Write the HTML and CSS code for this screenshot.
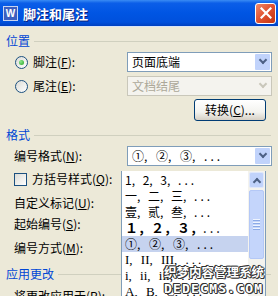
FILE: index.html
```html
<!DOCTYPE html>
<html lang="zh-CN">
<head>
<meta charset="UTF-8">
<title>脚注和尾注</title>
<link rel="stylesheet" href="styles.css">
</head>
<body>

<div class="window">

<div class="titlebar">
<span class="app-icon">W</span>
<span class="title">脚注和尾注</span>
<span class="close">
<svg width="12" height="12" viewBox="0 0 12 12"><path d="M1.5 1.5 L10.5 10.5 M10.5 1.5 L1.5 10.5" stroke="#fff" stroke-width="2.2" stroke-linecap="square"/></svg>
</span>
</div>

<div class="content">

<div class="group-label">位置</div>

<div class="row">
<label class="opt"><span class="radio checked"></span>脚注(<u>F</u>):</label>
<div class="select"><span class="value">页面底端</span><span class="arrow"></span></div>
</div>

<div class="row">
<label class="opt"><span class="radio"></span>尾注(<u>E</u>):</label>
<div class="select disabled"><span class="value">文档结尾</span><span class="arrow"></span></div>
</div>

<div class="btn-row">
<button class="btn">转换(<u>C</u>)...</button>
</div>

<div class="group-label">格式</div>

<div class="row">
<label class="plain">编号格式(<u>N</u>):</label>
<div class="select"><span class="value num">①, ②, ③, <b class="dots">...</b></span><span class="arrow"></span></div>
</div>

<div class="label-row first">
<label class="opt"><span class="check"></span>方括号样式(<u>Q</u>):</label>
</div>
<div class="label-row">
<label class="plain">自定义标记(<u>U</u>):</label>
</div>
<div class="label-row">
<label class="plain">起始编号(<u>S</u>):</label>
</div>
<div class="label-row tall">
<label class="plain">编号方式(<u>M</u>):</label>
</div>

<div class="group-label apply">应用更改</div>

<div class="label-row">
<label class="plain">将更改应用于(<u>P</u>):</label>
</div>

<div class="dropdown">
<ul class="items">
<li>1, 2, 3, <b class="dots">...</b></li>
<li>一, 二, 三, <b class="dots">...</b></li>
<li>壹, 贰, 叁, <b class="dots">...</b></li>
<li class="bold">１，２，３，<b class="dots">...</b></li>
<li class="sel">①, ②, ③, <b class="dots">...</b></li>
<li class="serif">I, II, III, <b class="dots">...</b></li>
<li class="serif">i, ii, iii, <b class="dots">...</b></li>
<li class="serif">A, B, C, <b class="dots">...</b></li>
</ul>
<div class="scrollbar">
<span class="sb-up"></span>
<span class="sb-thumb"><i></i><i></i><i></i><i></i></span>
</div>
</div>

<div class="watermark">
<span class="wm-cn">织梦内容管理系统</span>
<span class="wm-en">DEDECMS.COM</span>
</div>

</div>
</div>

</body>
</html>
```

FILE: styles.css
```css
body{
    margin:0;
    background:#ece9d8;
    font-family:"Noto Sans CJK SC", "Liberation Sans", sans-serif;
    font-size:12px;
    color:#000;
}

.window{
    width:278px;
    height:296px;
    overflow:hidden;
    background:#ece9d8;
}

.titlebar{
    height:26px;
    display:flex;
    align-items:center;
    padding:0 2px 0 3px;
    background:linear-gradient(#3a8cf4 0%, #0b5ee8 12%, #0055e3 50%, #0050dc 85%, #0040c0 100%);
    border-bottom:1px solid #d8e4f8;
}

.app-icon{
    width:13px;
    height:13px;
    background:#3d5fc0;
    border:1px solid #c8d4f0;
    color:#fff;
    font:bold 10px/13px "Liberation Sans", sans-serif;
    text-align:center;
}

.title{
    margin-left:5px;
    color:#fff;
    font-weight:bold;
    font-size:13px;
    text-shadow:1px 1px 0 #0a1f7a;
    flex:1;
}

.close{
    width:19px;
    height:19px;
    border:1px solid #fff;
    border-radius:3px;
    background:linear-gradient(135deg, #f08a6c 0%, #e0512f 50%, #c4330f 100%);
    display:flex;
    align-items:center;
    justify-content:center;
}

.content{
    position:relative;
    padding:0 6px;
}

.group-label{
    display:flex;
    align-items:center;
    color:#0046d5;
    line-height:14px;
    height:14px;
    margin-top:7px;
}

.group-label::after{
    content:"";
    flex:1;
    height:1px;
    background:#d0d0bf;
    margin-left:4px;
    margin-right:1px;
}

.row{
    display:grid;
    grid-template-columns:113px 145px;
    align-items:center;
    padding-left:8px;
    margin-top:4px;
    height:20px;
}

label{
    display:flex;
    align-items:center;
    line-height:14px;
    white-space:nowrap;
}

label u{
    text-decoration:underline;
}

.radio{
    width:11px;
    height:11px;
    border:1px solid #1c5180;
    border-radius:50%;
    background:linear-gradient(135deg, #dcdcd6, #fff);
    margin:0 5px 0 1px;
    display:flex;
    align-items:center;
    justify-content:center;
}

.radio.checked::after{
    content:"";
    width:5px;
    height:5px;
    border-radius:50%;
    background:radial-gradient(circle at 35% 35%, #8ee88e, #21a121);
}

.check{
    width:11px;
    height:11px;
    border:1px solid #1c5180;
    background:linear-gradient(135deg, #dcdcd6, #fff);
    margin-right:5px;
}

.select{
    height:20px;
    box-sizing:border-box;
    border:1px solid #7f9db9;
    background:#fff;
    display:flex;
    align-items:center;
    padding:1px;
}

.select .value{
    flex:1;
    padding-left:3px;
    line-height:16px;
    white-space:nowrap;
}

.select .value.num{
    word-spacing:6px;
}

.dots{
    font-weight:normal;
    letter-spacing:3px;
}

.select .arrow{
    width:15px;
    height:16px;
    background:#c1d3fb;
    border-radius:1px;
    display:flex;
    align-items:center;
    justify-content:center;
}

.select .arrow::after{
    content:"";
    width:4px;
    height:4px;
    border-right:2px solid #4d6185;
    border-bottom:2px solid #4d6185;
    transform:translateY(-2px) rotate(45deg);
}

.select.disabled{
    border-color:#c9c7ba;
    background:#f4f3ee;
}

.select.disabled .value{
    color:#aca899;
}

.select.disabled .arrow{
    background:#f4f3ee;
}

.select.disabled .arrow::after{
    border-color:#c9c7ba;
}

.btn-row{
    display:flex;
    justify-content:flex-end;
    margin-top:3px;
    padding-right:6px;
}

.btn{
    width:72px;
    height:22px;
    border:1px solid #003c74;
    border-radius:3px;
    background:linear-gradient(#fff 0%, #f3f3ef 60%, #d6d0c5 100%);
    font-family:"Noto Sans CJK SC", sans-serif;
    font-size:12px;
    padding:0;
    line-height:14px;
}

.label-row{
    padding-left:8px;
    height:21px;
    display:flex;
    align-items:center;
}

.label-row.first{
    height:26px;
}

.label-row.tall{
    height:28px;
}

.group-label.apply{
    margin-top:5px;
    margin-bottom:4px;
}

.dropdown{
    position:absolute;
    left:121px;
    top:137px;
    width:145px;
    height:140px;
    box-sizing:border-box;
    border:1px solid #7f9db9;
    border-top:none;
    background:#fff;
    display:flex;
}

.items{
    list-style:none;
    margin:0;
    padding:1px 0 0;
    flex:1;
    overflow:hidden;
}

.items li{
    height:16px;
    line-height:16px;
    padding-left:3px;
    white-space:nowrap;
    word-spacing:5px;
}

.items li.bold{
    font-weight:bold;
    font-size:13px;
    word-spacing:0;
}

.items li.serif{
    font-family:"Liberation Serif", "Noto Sans CJK SC", serif;
    font-size:13px;
}

.items li.sel{
    background:#c6d3ef;
    word-spacing:6px;
}

.scrollbar{
    width:17px;
    background:#f4f3ee;
    display:flex;
    flex-direction:column;
    align-items:center;
    padding-top:1px;
}

.sb-up{
    width:15px;
    height:16px;
    background:#c1d3fb;
    border:1px solid #e0e8fb;
    box-sizing:border-box;
    border-radius:2px;
    display:flex;
    align-items:center;
    justify-content:center;
}

.sb-up::after{
    content:"";
    width:4px;
    height:4px;
    border-left:2px solid #4d6185;
    border-top:2px solid #4d6185;
    transform:translateY(2px) rotate(45deg);
}

.sb-thumb{
    margin-top:2px;
    width:15px;
    height:69px;
    box-sizing:border-box;
    background:#c4d5fb;
    border:1px solid #b4c8f6;
    border-radius:2px;
    display:flex;
    flex-direction:column;
    align-items:center;
    justify-content:center;
    gap:1px;
}

.sb-thumb i{
    width:7px;
    height:1px;
    background:#eef4fe;
    border-bottom:1px solid #8caae6;
}

.watermark{
    position:absolute;
    left:164px;
    top:229px;
    display:flex;
    flex-direction:column;
    color:#fff;
    font-weight:bold;
    text-shadow:1px 0 0 #333, -1px 0 0 #333, 0 1px 0 #333, 0 -1px 0 #333, 1px 1px 0 #333, -1px -1px 0 #333;
}

.wm-cn{
    font-size:12.5px;
    line-height:17px;
}

.wm-en{
    font-family:"DejaVu Sans Mono", monospace;
    font-size:13px;
    line-height:18px;
    letter-spacing:1.2px;
}
```
